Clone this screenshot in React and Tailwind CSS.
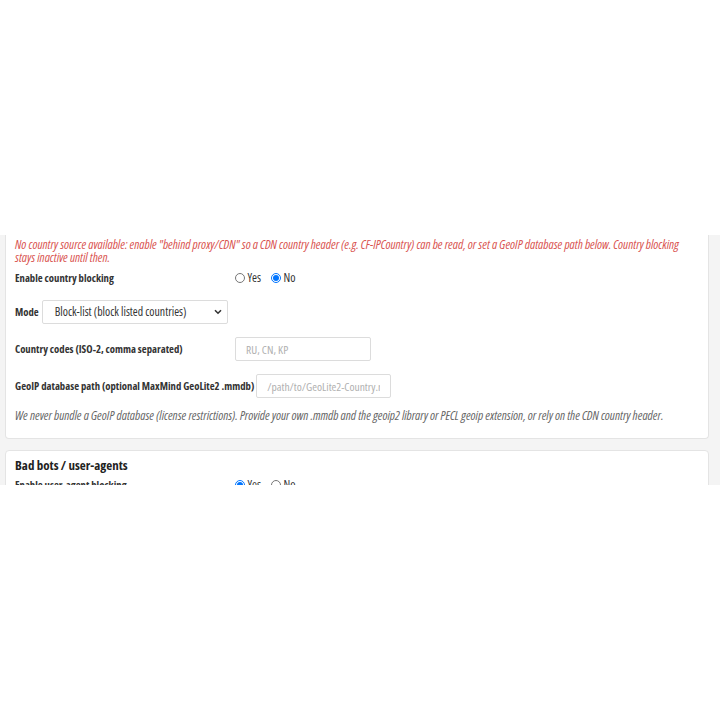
import React from "react";

function Radio({ checked, name, label }) {
    return (
        <label className="flex items-center">
            <input
                type="radio"
                name={name}
                defaultChecked={checked}
                className="w-[9.5px] h-[9.5px] m-0"
            />
            <span className="ml-[3px] text-[12px] font-stretch-80% text-[#333]">{label}</span>
        </label>
    );
}

function Chevron() {
    return (
        <svg width="8" height="6" viewBox="0 0 8 6" className="shrink-0">
            <path d="M1 1.2 L4 4.2 L7 1.2" fill="none" stroke="#333" strokeWidth="1.6" />
        </svg>
    );
}

export default function App() {
    return (
        <div className="min-h-[720px] bg-white pt-[235px] font-['Open_Sans',sans-serif] font-stretch-75%">
            <div className="h-[250px] overflow-hidden bg-[#f4f4f4] pl-[5px] pr-[11px]">
                <div className="bg-white border border-t-0 border-[#e4e4e4] rounded-b-[4px] px-[9px] pt-[3px] pb-[16px]">
                    <p className="text-[12.5px] leading-[13px] italic text-[#d9534f]">
                        No country source available: enable "behind proxy/CDN" so a CDN country header (e.g.
                        CF-IPCountry) can be read, or set a GeoIP database path below. Country blocking
                        <br />
                        stays inactive until then.
                    </p>

                    <div className="flex items-center h-[24px] mt-[2px]">
                        <span className="w-[220px] shrink-0 text-[10.7px] font-bold text-[#333]">
                            Enable country blocking
                        </span>
                        <div className="flex items-center gap-[10px]">
                            <Radio name="cb" label="Yes" />
                            <Radio name="cb" label="No" checked />
                        </div>
                    </div>

                    <div className="flex items-center h-[24px] mt-[10px]">
                        <span className="text-[10.7px] font-bold text-[#333]">Mode</span>
                        <div className="ml-[3px] w-[186px] h-[24px] border border-[#dcdcdc] rounded-[2px] flex items-center justify-between pl-[12px] pr-[5px]">
                            <span className="text-[11.8px] font-stretch-87.5% text-[#333]">
                                Block-list (block listed countries)
                            </span>
                            <Chevron />
                        </div>
                    </div>

                    <div className="flex items-center h-[24px] mt-[13px]">
                        <span className="w-[220px] shrink-0 text-[10.7px] font-bold text-[#333]">
                            Country codes (ISO-2, comma separated)
                        </span>
                        <input
                            type="text"
                            placeholder="RU, CN, KP"
                            className="w-[136px] h-[24px] border border-[#dcdcdc] rounded-[2px] px-[10px] text-[11.5px] placeholder:text-[#b0b0b0] outline-none"
                        />
                    </div>

                    <div className="flex items-center h-[24px] mt-[13px]">
                        <span className="text-[10.7px] font-bold text-[#333]">
                            GeoIP database path (optional MaxMind GeoLite2 .mmdb)
                        </span>
                        <input
                            type="text"
                            placeholder="/path/to/GeoLite2-Country.mmdb"
                            className="ml-[2px] w-[135px] h-[24px] border border-[#dcdcdc] rounded-[2px] px-[10px] text-[11.5px] placeholder:text-[#b0b0b0] outline-none"
                        />
                    </div>

                    <p className="mt-[11px] text-[12.5px] leading-[13px] italic text-[#666]">
                        We never bundle a GeoIP database (license restrictions). Provide your own .mmdb and the
                        geoip2 library or PECL geoip extension, or rely on the CDN country header.
                    </p>
                </div>

                <div className="mt-[11px] bg-white border border-[#e4e4e4] rounded-[4px] px-[9px] pt-[6px] pb-[16px]">
                    <h3 className="text-[13px] leading-[16px] font-bold text-[#222]">Bad bots / user-agents</h3>
                    <div className="flex items-center h-[24px]">
                        <span className="w-[220px] shrink-0 text-[10.7px] font-bold text-[#333]">
                            Enable user-agent blocking
                        </span>
                        <div className="flex items-center gap-[10px]">
                            <Radio name="ua" label="Yes" checked />
                            <Radio name="ua" label="No" />
                        </div>
                    </div>
                </div>
            </div>
        </div>
    );
}
